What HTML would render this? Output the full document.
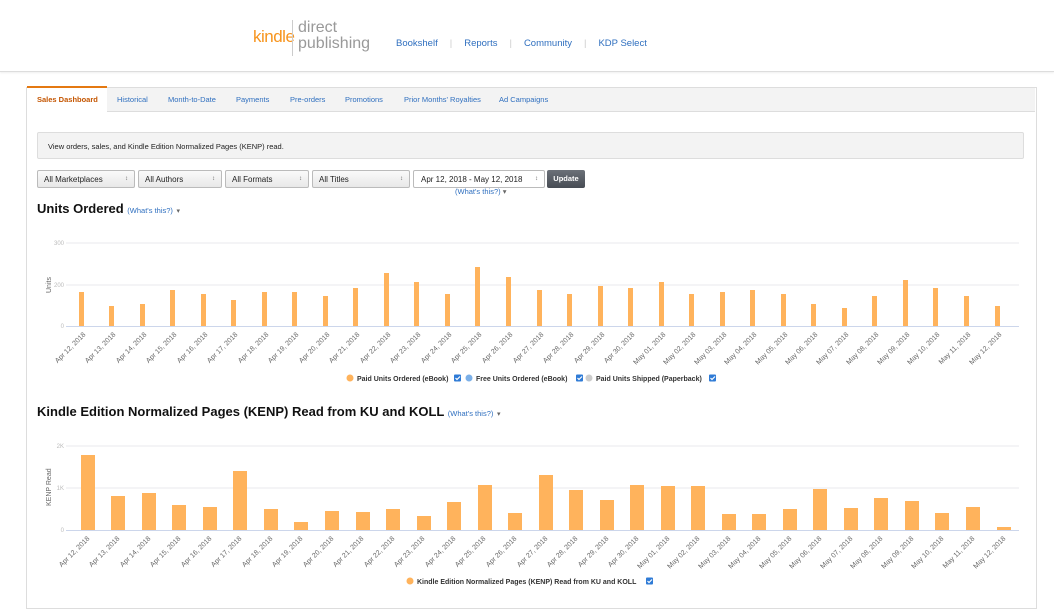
<!DOCTYPE html>
<html><head><meta charset="utf-8"><style>
body{margin:0;width:1054px;height:600px;overflow:hidden;background:#fff;font-family:"Liberation Sans",Arial,sans-serif;position:relative}
.hdr{position:absolute;left:0;top:0;width:1054px;height:71px;border-bottom:1px solid #ddd;box-shadow:0 1px 2px #eee}
.a{color:#2f6fbf;text-decoration:none}
.abs{position:absolute}
.sel{position:absolute;top:170px;height:17px;border:1px solid #bbb;border-radius:2px;background:linear-gradient(#fafafa,#e8e8e8);font-size:8px;line-height:17px;padding-left:6px;box-sizing:border-box;height:18px;color:#222}
.sel:after{content:"\2195";position:absolute;right:6px;top:0;font-size:6px;color:#666}
</style></head><body>
<div class="hdr">
 <div class="abs" style="left:253px;top:27px;font-size:17px;color:#f7941d;letter-spacing:-0.5px">kindle</div>
 <div class="abs" style="left:292px;top:20px;width:1px;height:36px;background:#ccc"></div>
 <div class="abs" style="left:298px;top:20px;font-size:16px;color:#999;line-height:16px">direct<br>publishing</div>
 <div class="abs" style="left:396px;top:38px;font-size:9.5px"><span class="a">Bookshelf</span><span style="color:#ccc;margin:0 12px">|</span><span class="a">Reports</span><span style="color:#ccc;margin:0 12px">|</span><span class="a">Community</span><span style="color:#ccc;margin:0 12px">|</span><span class="a">KDP Select</span></div>
</div>
<div class="abs" style="left:26px;top:87px;width:1009px;height:520px;border:1px solid #ddd"></div>
<div class="abs" style="left:27px;top:88px;width:1008px;height:23px;background:#f3f3f3;border-bottom:1px solid #ddd"></div>
<div class="abs" style="left:27px;top:86px;width:80px;height:26px;background:#fff;border-top:2px solid #e47911;box-sizing:border-box"></div>
<div class="abs" style="top:95px;font-size:7.5px;left:0;width:1054px">
<span class="abs" style="left:37px;color:#c45500;font-weight:bold">Sales Dashboard</span>
<span class="abs a" style="left:117px">Historical</span>
<span class="abs a" style="left:168px">Month-to-Date</span>
<span class="abs a" style="left:236px">Payments</span>
<span class="abs a" style="left:290px">Pre-orders</span>
<span class="abs a" style="left:345px">Promotions</span>
<span class="abs a" style="left:404px">Prior Months' Royalties</span>
<span class="abs a" style="left:499px">Ad Campaigns</span>
</div>
<div class="abs" style="left:37px;top:132px;width:987px;height:27px;background:#f3f3f3;border:1px solid #ddd;border-radius:2px;font-size:7.5px;line-height:27px;padding-left:10px;box-sizing:border-box;color:#222">View orders, sales, and Kindle Edition Normalized Pages (KENP) read.</div>
<div class="sel" style="left:37px;width:98px">All Marketplaces</div>
<div class="sel" style="left:138px;width:84px">All Authors</div>
<div class="sel" style="left:225px;width:84px">All Formats</div>
<div class="sel" style="left:312px;width:98px">All Titles</div>
<div class="sel" style="left:413px;width:132px;background:#fff;padding-left:7px">Apr 12, 2018 - May 12, 2018</div>
<div class="abs" style="left:547px;top:170px;width:38px;height:18px;background:linear-gradient(#6b7078,#474c54);border-radius:2px;color:#fff;font-size:7.5px;font-weight:bold;line-height:18px;text-align:center">Update</div>
<div class="abs a" style="left:455px;top:187px;font-size:7.5px">(What's this?) <span style="color:#666">▾</span></div>
<div class="abs" style="left:37px;top:201px;font-size:13px;font-weight:bold;color:#111">Units Ordered <span class="a" style="font-size:7.5px;font-weight:normal">(What's this?)</span> <span style="font-size:7px;color:#666;font-weight:normal">▾</span></div>
<div class="abs" style="left:37px;top:404px;font-size:13px;font-weight:bold;color:#111">Kindle Edition Normalized Pages (KENP) Read from KU and KOLL <span class="a" style="font-size:7.5px;font-weight:normal">(What's this?)</span> <span style="font-size:7px;color:#666;font-weight:normal">▾</span></div>

<svg class="abs" style="left:0;top:0" width="1054" height="600" font-family="Liberation Sans, sans-serif">
<g stroke="#e8e8ee" stroke-width="1"><line x1="66" y1="243" x2="1019" y2="243"/><line x1="66" y1="285" x2="1019" y2="285"/><line x1="66" y1="446" x2="1019" y2="446"/><line x1="66" y1="488" x2="1019" y2="488"/></g>
<g stroke="#ccd6eb"><line x1="66" y1="326.5" x2="1019" y2="326.5"/><line x1="66" y1="530.5" x2="1019" y2="530.5"/></g>
<g font-size="6" fill="#bbb" text-anchor="end"><text x="64" y="245">300</text><text x="64" y="287">200</text><text x="64" y="328">0</text><text x="64" y="448">2K</text><text x="64" y="490">1K</text><text x="64" y="532">0</text></g>
<text transform="translate(51,293) rotate(-90)" font-size="7" fill="#666">Units</text>
<text transform="translate(51,506) rotate(-90)" font-size="7" fill="#666">KENP Read</text>
<g fill="#ffb35c">
<rect x="79" y="292" width="5" height="34"/><rect x="109" y="306" width="5" height="20"/><rect x="140" y="304" width="5" height="22"/><rect x="170" y="290" width="5" height="36"/><rect x="201" y="294" width="5" height="32"/><rect x="231" y="300" width="5" height="26"/><rect x="262" y="292" width="5" height="34"/><rect x="292" y="292" width="5" height="34"/><rect x="323" y="296" width="5" height="30"/><rect x="353" y="288" width="5" height="38"/><rect x="384" y="273" width="5" height="53"/><rect x="414" y="282" width="5" height="44"/><rect x="445" y="294" width="5" height="32"/><rect x="475" y="267" width="5" height="59"/><rect x="506" y="277" width="5" height="49"/><rect x="537" y="290" width="5" height="36"/><rect x="567" y="294" width="5" height="32"/><rect x="598" y="286" width="5" height="40"/><rect x="628" y="288" width="5" height="38"/><rect x="659" y="282" width="5" height="44"/><rect x="689" y="294" width="5" height="32"/><rect x="720" y="292" width="5" height="34"/><rect x="750" y="290" width="5" height="36"/><rect x="781" y="294" width="5" height="32"/><rect x="811" y="304" width="5" height="22"/><rect x="842" y="308" width="5" height="18"/><rect x="872" y="296" width="5" height="30"/><rect x="903" y="280" width="5" height="46"/><rect x="933" y="288" width="5" height="38"/><rect x="964" y="296" width="5" height="30"/><rect x="995" y="306" width="5" height="20"/>
<rect x="81" y="455" width="14" height="75"/><rect x="111" y="496" width="14" height="34"/><rect x="142" y="493" width="14" height="37"/><rect x="172" y="505" width="14" height="25"/><rect x="203" y="507" width="14" height="23"/><rect x="233" y="471" width="14" height="59"/><rect x="264" y="509" width="14" height="21"/><rect x="294" y="522" width="14" height="8"/><rect x="325" y="511" width="14" height="19"/><rect x="356" y="512" width="14" height="18"/><rect x="386" y="509" width="14" height="21"/><rect x="417" y="516" width="14" height="14"/><rect x="447" y="502" width="14" height="28"/><rect x="478" y="485" width="14" height="45"/><rect x="508" y="513" width="14" height="17"/><rect x="539" y="475" width="14" height="55"/><rect x="569" y="490" width="14" height="40"/><rect x="600" y="500" width="14" height="30"/><rect x="630" y="485" width="14" height="45"/><rect x="661" y="486" width="14" height="44"/><rect x="691" y="486" width="14" height="44"/><rect x="722" y="514" width="14" height="16"/><rect x="752" y="514" width="14" height="16"/><rect x="783" y="509" width="14" height="21"/><rect x="813" y="489" width="14" height="41"/><rect x="844" y="508" width="14" height="22"/><rect x="874" y="498" width="14" height="32"/><rect x="905" y="501" width="14" height="29"/><rect x="935" y="513" width="14" height="17"/><rect x="966" y="507" width="14" height="23"/><rect x="997" y="527" width="14" height="3"/>
</g>
<g font-size="7" fill="#666" text-anchor="end" id="l1">
<text transform="translate(86,335) rotate(-45)">Apr 12, 2018</text><text transform="translate(116,335) rotate(-45)">Apr 13, 2018</text><text transform="translate(147,335) rotate(-45)">Apr 14, 2018</text><text transform="translate(177,335) rotate(-45)">Apr 15, 2018</text><text transform="translate(208,335) rotate(-45)">Apr 16, 2018</text><text transform="translate(238,335) rotate(-45)">Apr 17, 2018</text><text transform="translate(269,335) rotate(-45)">Apr 18, 2018</text><text transform="translate(299,335) rotate(-45)">Apr 19, 2018</text><text transform="translate(330,335) rotate(-45)">Apr 20, 2018</text><text transform="translate(360,335) rotate(-45)">Apr 21, 2018</text><text transform="translate(391,335) rotate(-45)">Apr 22, 2018</text><text transform="translate(421,335) rotate(-45)">Apr 23, 2018</text><text transform="translate(452,335) rotate(-45)">Apr 24, 2018</text><text transform="translate(482,335) rotate(-45)">Apr 25, 2018</text><text transform="translate(513,335) rotate(-45)">Apr 26, 2018</text><text transform="translate(544,335) rotate(-45)">Apr 27, 2018</text><text transform="translate(574,335) rotate(-45)">Apr 28, 2018</text><text transform="translate(605,335) rotate(-45)">Apr 29, 2018</text><text transform="translate(635,335) rotate(-45)">Apr 30, 2018</text><text transform="translate(666,335) rotate(-45)">May 01, 2018</text><text transform="translate(696,335) rotate(-45)">May 02, 2018</text><text transform="translate(727,335) rotate(-45)">May 03, 2018</text><text transform="translate(757,335) rotate(-45)">May 04, 2018</text><text transform="translate(788,335) rotate(-45)">May 05, 2018</text><text transform="translate(818,335) rotate(-45)">May 06, 2018</text><text transform="translate(849,335) rotate(-45)">May 07, 2018</text><text transform="translate(879,335) rotate(-45)">May 08, 2018</text><text transform="translate(910,335) rotate(-45)">May 09, 2018</text><text transform="translate(940,335) rotate(-45)">May 10, 2018</text><text transform="translate(971,335) rotate(-45)">May 11, 2018</text><text transform="translate(1002,335) rotate(-45)">May 12, 2018</text>
</g>
<g font-size="7" fill="#666" text-anchor="end">
<text transform="translate(90,539) rotate(-45)">Apr 12, 2018</text><text transform="translate(120,539) rotate(-45)">Apr 13, 2018</text><text transform="translate(151,539) rotate(-45)">Apr 14, 2018</text><text transform="translate(181,539) rotate(-45)">Apr 15, 2018</text><text transform="translate(212,539) rotate(-45)">Apr 16, 2018</text><text transform="translate(242,539) rotate(-45)">Apr 17, 2018</text><text transform="translate(273,539) rotate(-45)">Apr 18, 2018</text><text transform="translate(303,539) rotate(-45)">Apr 19, 2018</text><text transform="translate(334,539) rotate(-45)">Apr 20, 2018</text><text transform="translate(364,539) rotate(-45)">Apr 21, 2018</text><text transform="translate(395,539) rotate(-45)">Apr 22, 2018</text><text transform="translate(425,539) rotate(-45)">Apr 23, 2018</text><text transform="translate(456,539) rotate(-45)">Apr 24, 2018</text><text transform="translate(486,539) rotate(-45)">Apr 25, 2018</text><text transform="translate(517,539) rotate(-45)">Apr 26, 2018</text><text transform="translate(548,539) rotate(-45)">Apr 27, 2018</text><text transform="translate(578,539) rotate(-45)">Apr 28, 2018</text><text transform="translate(609,539) rotate(-45)">Apr 29, 2018</text><text transform="translate(639,539) rotate(-45)">Apr 30, 2018</text><text transform="translate(670,539) rotate(-45)">May 01, 2018</text><text transform="translate(700,539) rotate(-45)">May 02, 2018</text><text transform="translate(731,539) rotate(-45)">May 03, 2018</text><text transform="translate(761,539) rotate(-45)">May 04, 2018</text><text transform="translate(792,539) rotate(-45)">May 05, 2018</text><text transform="translate(822,539) rotate(-45)">May 06, 2018</text><text transform="translate(853,539) rotate(-45)">May 07, 2018</text><text transform="translate(883,539) rotate(-45)">May 08, 2018</text><text transform="translate(914,539) rotate(-45)">May 09, 2018</text><text transform="translate(944,539) rotate(-45)">May 10, 2018</text><text transform="translate(975,539) rotate(-45)">May 11, 2018</text><text transform="translate(1006,539) rotate(-45)">May 12, 2018</text>
</g>
<g font-size="7" font-weight="bold" fill="#333">
<circle cx="350" cy="378" r="3.5" fill="#ffb35c"/><text x="357" y="381">Paid Units Ordered (eBook)</text><rect x="454" y="374.5" width="7" height="7" rx="1" fill="#2f7bd6"/>
<circle cx="469" cy="378" r="3.5" fill="#7cb0e8"/><text x="476" y="381">Free Units Ordered (eBook)</text><rect x="576" y="374.5" width="7" height="7" rx="1" fill="#2f7bd6"/>
<circle cx="589" cy="378" r="3.5" fill="#ccc"/><text x="596" y="381">Paid Units Shipped (Paperback)</text><rect x="709" y="374.5" width="7" height="7" rx="1" fill="#2f7bd6"/>
<circle cx="410" cy="581" r="3.5" fill="#ffb35c"/><text x="417" y="584">Kindle Edition Normalized Pages (KENP) Read from KU and KOLL</text><rect x="646" y="577.5" width="7" height="7" rx="1" fill="#2f7bd6"/>
</g>
<g stroke="#fff" stroke-width="1.2" fill="none"><path d="M455.5 378l1.5 1.5 3-3M577.5 378l1.5 1.5 3-3M710.5 378l1.5 1.5 3-3M647.5 581l1.5 1.5 3-3"/></g>
</svg>
</body></html>
